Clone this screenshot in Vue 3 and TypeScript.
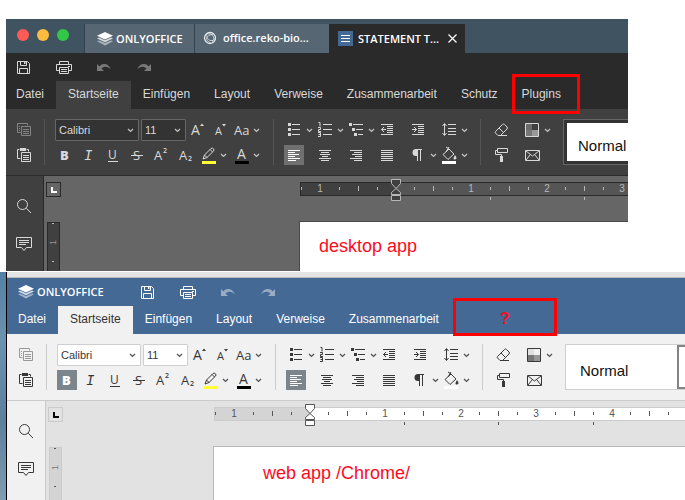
<script setup lang="ts">
import { h } from 'vue'

interface Tool {
  icon: string
  label: string
  caret?: boolean
  off?: boolean
}
interface Editor {
  id: string
  theme: 'dark' | 'light'
  tabs: string[]
  pressed: string[]
  note: string
  quarters: number
}

const editors: Editor[] = [
  {
    id: 'desktop',
    theme: 'dark',
    tabs: ['Datei', 'Startseite', 'Einfügen', 'Layout', 'Verweise', 'Zusammenarbeit', 'Schutz', 'Plugins'],
    pressed: ['left'],
    note: 'desktop app',
    quarters: 15,
  },
  {
    id: 'web',
    theme: 'light',
    tabs: ['Datei', 'Startseite', 'Einfügen', 'Layout', 'Verweise', 'Zusammenarbeit'],
    pressed: ['bold', 'left'],
    note: 'web app /Chrome/',
    quarters: 19,
  },
]

const quick: Tool[] = [
  { icon: 'save', label: 'Speichern' },
  { icon: 'print', label: 'Drucken' },
  { icon: 'undo', label: 'Rückgängig', off: true },
  { icon: 'redo', label: 'Wiederholen', off: true },
]
const clipboard: Tool[] = [
  { icon: 'copy', label: 'Kopieren', off: true },
  { icon: 'paste', label: 'Einfügen' },
]
const sizing: Tool[] = [
  { icon: 'grow', label: 'Schrift vergrößern' },
  { icon: 'shrink', label: 'Schrift verkleinern' },
  { icon: 'case', label: 'Groß-/Kleinschreibung', caret: true },
]
const styling: Tool[] = [
  { icon: 'bold', label: 'Fett' },
  { icon: 'italic', label: 'Kursiv' },
  { icon: 'underline', label: 'Unterstrichen' },
  { icon: 'strike', label: 'Durchgestrichen' },
  { icon: 'sup', label: 'Hochgestellt' },
  { icon: 'sub', label: 'Tiefgestellt' },
  { icon: 'marker', label: 'Hervorheben', caret: true },
  { icon: 'color', label: 'Schriftfarbe', caret: true },
]
const paragraph: Tool[] = [
  { icon: 'bullets', label: 'Aufzählung', caret: true },
  { icon: 'numbers', label: 'Nummerierung', caret: true },
  { icon: 'levels', label: 'Liste mit Ebenen', caret: true },
  { icon: 'outdent', label: 'Einzug verkleinern' },
  { icon: 'indent', label: 'Einzug vergrößern' },
  { icon: 'spacing', label: 'Zeilenabstand', caret: true },
  { icon: 'left', label: 'Linksbündig' },
  { icon: 'center', label: 'Zentriert' },
  { icon: 'right', label: 'Rechtsbündig' },
  { icon: 'justify', label: 'Blocksatz' },
  { icon: 'pilcrow', label: 'Formatierungszeichen', caret: true },
  { icon: 'fill', label: 'Hintergrundfarbe', caret: true },
]
const extras: Tool[] = [
  { icon: 'eraser', label: 'Stil löschen' },
  { icon: 'scheme', label: 'Farbschema', caret: true },
  { icon: 'brush', label: 'Stil kopieren' },
  { icon: 'mail', label: 'Seriendruck' },
]

const glyph = (x: number, y: number, size: number, text: string, extra = '') =>
  `<text x="${x}" y="${y}" font-size="${size}" font-family="Open Sans, sans-serif" fill="currentColor" stroke="none" ${extra}>${text}</text>`
const bar = (color: string) => `<path d="M3 16h14v3H3z" fill="${color}" stroke="none"/>`
const solid = (d: string) => `<path d="${d}" fill="currentColor" stroke="none"/>`
const line = (d: string) => `<path d="${d}"/>`

const icons: Record<string, string> = {
  save: line('M3.5 4.5h10l2 2v10h-12zM6.500 4.500v4h6v-4M5.500 16.500v-5h8v5') + solid('M10 5h1.500v2H10z'),
  print: line('M5.500 7.500v-3h9v3M5.500 13.500h-3v-6h15v6h-3M5.500 10.500h9v6h-9zM7 12.500h6M7 14.500h6') + solid('M14 9h2v1h-2z'),
  undo: solid('M3 7v7h7l-2.500-2.500C10 9 14 9 17 12.500C14.500 6.500 8.500 5.500 5.500 9.500z'),
  redo: solid('M17 7v7h-7l2.500-2.500C10 9 6 9 3 12.500C5.500 6.500 11.500 5.500 14.500 9.500z'),
  copy: line('M6.500 12.500h-3v-9h10v2M7.500 6.500h9v9h-9zM5 6.500h1M5 8.500h1M5 10.500h1M9 9.500h6M9 11.500h6M9 13.500h6'),
  paste: line('M6.500 13.500h-3v-9h2M12.500 4.500h2v2M7.500 7.500h9v9h-9zM9 10.500h6M9 12.500h6M9 14.500h6') + solid('M6 3h6v3H6z'),
  search: '<circle cx="8.500" cy="8.500" r="5"/>' + line('M12.300 12.300L17 17'),
  comment: line('M2.500 3.500h15v10h-5l-2.500 3-2.500-3h-5zM5 6.500h10M5 8.500h10M5 10.500h7'),
  grow: glyph(3, 15, 14, 'A') + solid('M12 6l2-2.500 2 2.500z'),
  shrink: glyph(5, 15, 11, 'A') + solid('M12 4h4l-2 2.500z'),
  case: glyph(2, 15, 13, 'Aa'),
  bold: glyph(5, 15, 13, 'B', 'font-weight="800"'),
  italic: '<text x="5" y="15" font-size="14" font-style="italic" font-family="Liberation Mono, monospace" fill="currentColor" stroke="none">I</text>',
  underline: glyph(5, 14, 12, 'U') + line('M5 16.500h10'),
  strike: glyph(6, 15, 13, 'S') + line('M4 10.500h12'),
  sup: glyph(3, 15, 13, 'A') + glyph(12, 8, 7, '2', 'font-weight="600"'),
  sub: glyph(4, 15, 13, 'A') + glyph(13, 16, 7, '2', 'font-weight="600"'),
  marker: bar('#ffff38') + line('M4 14l1.500-4L12 3.500q1.500-.8 2.500.3t0 2.300L8 12.500l-4 1.500M5.500 10l2.500 2.500M11 4.500l2.500 2.500'),
  color: bar('#000') + glyph(5, 14, 14, 'A'),
  bullets: line('M8 4.500h8M8 9.500h8M8 14.500h8') + solid('M4 3h3v3H4zM4 8h3v3H4zM4 13h3v3H4z'),
  numbers:
    line('M8 4.500h9M8 9.500h9M8 14.500h9') +
    line('M3.500 2.500h1.500v4M3 7.500h2.500v2h-2v2H6M3 12.500h2.500v4H3M3.500 14.500h2'),
  levels: line('M7 4.500h10M10 9.500h7M12 14.500h5') + solid('M3 3h3v3H3zM6 8h3v3H6zM8 13h3v3H8z'),
  outdent: line('M4 4.500h12M10 6.500h6M10 8.500h6M10 10.500h6M10 12.500h6M4 14.500h12M9 9.500H4.500M7 7L4.500 9.500 7 12'),
  indent: line('M4 4.500h12M10 6.500h6M10 8.500h6M10 10.500h6M10 12.500h6M4 14.500h12M4 9.500h4.500M6 7l2.500 2.500L6 12'),
  spacing: line('M9 4.500h8M9 8.500h8M9 11.500h8M9 14.500h8M5.500 4v11M3.500 6l2-2.500 2 2.500M3.500 13l2 2.500 2-2.500'),
  left: line('M4 5.500h12M4 7.500h7M4 9.500h11M4 11.500h7M4 13.500h12M4 15.500h8'),
  center: line('M4 5.500h12M6 7.500h8M5 9.500h10M7 11.500h6M4 13.500h12M6 15.500h8'),
  right: line('M4 5.500h12M8 7.500h8M6 9.500h10M9 11.500h7M4 13.500h12M8 15.500h8'),
  justify: line('M4 5.500h12M4 7.500h12M4 9.500h12M4 11.500h12M4 13.500h12M4 15.500h12'),
  pilcrow: line('M9.500 5v11M12.500 5v11M8 4.500h6') + solid('M10 4H8a3.500 3.500 0 0 0 0 7h2z'),
  fill: bar('#fff') + line('M4 9.500l6-5.500 5 5-6 5.500zM10 4l-3-2M7 7l3-5') + solid('M16 10q3 4 0 4.500t0-4.500z'),
  eraser: line('M4.500 11.500l7-7q1-1 2 0l2.500 2.500q1 1 0 2l-6.500 6.500h-2.500l-2.500-2.500q-.7-.8 0-1.500M8 8l4.500 4.500M9 15.500h7'),
  scheme:
    '<path d="M4 4h6v6H4z" fill="#c0c0c0" fill-opacity=".35" stroke="none"/><path d="M4 10h6v6H4z" fill="#777" stroke="none"/><path d="M10 10h6v6h-6z" fill="#989898" stroke="none"/>' +
    line('M3.500 3.500h13v13h-13z'),
  brush: line('M6.500 3.500h10v4h-10zM6.500 5.500h-2v4h6v2') + solid('M9 11h3v6H9z'),
  mail: line('M3.500 5.500h14v10h-14zM4 6l6.500 5L17 6M4 15l4-5M17 15l-4-5'),
}

const Icon = (props: { name: string }) =>
  h('svg', {
    class: 'icon',
    width: 20,
    height: 20,
    viewBox: '0 0 20 20',
    fill: 'none',
    stroke: 'currentColor',
    'aria-hidden': 'true',
    innerHTML: icons[props.name],
  })
Icon.props = ['name']

const Chevron = () =>
  h('svg', { width: 7, height: 5, viewBox: '0 0 7 5', fill: 'none', stroke: 'currentColor', 'stroke-width': 1.3, opacity: 0.85, 'aria-hidden': 'true' }, [
    h('path', { d: 'M1 1l2.500 2.400L6 1' }),
  ])

const Logo = () =>
  h('svg', { width: 16, height: 14, viewBox: '0 0 16 14', fill: '#fff', 'aria-hidden': 'true' }, [
    h('path', { d: 'M0 9.300l2-.9 6 2.600 6-2.600 2 .9L8 13.500z', opacity: 0.5 }),
    h('path', { d: 'M0 6.500l2-.9L8 8.200l6-2.600 2 .9-8 3.800z', opacity: 0.75 }),
    h('path', { d: 'M8 0l8 3.700L8 7.400 0 3.700z' }),
  ])

// The ruler's zero sits 96px in; quarter units get ticks, whole units a number.
const ZERO = 96
const UNIT = 75.5
const marks = (last: number) => Array.from({ length: last + 6 }, (_, i) => i - 5).filter((q) => q !== 0)
const markX = (q: number) => Math.floor(ZERO + (q * UNIT) / 4)
const stops = Array.from({ length: 5 }, (_, i) => Math.floor(ZERO + (i + 1) * 94.4))
</script>

<template>
  <main class="sheet">
    <section v-for="ed in editors" :key="ed.id" class="editor" :class="ed.theme" :aria-label="ed.note">
      <div v-if="ed.theme === 'dark'" class="titlebar">
        <span class="lights"><i class="red"></i><i class="amber"></i><i class="green"></i></span>
        <button class="window-tab brand"><Logo />ONLYOFFICE</button>
        <button class="window-tab site">
          <svg width="14" height="14" viewBox="0 0 14 14" fill="none" stroke="#e6eaed" aria-hidden="true">
            <circle cx="7" cy="7" r="5.500" stroke-width="1.300" />
            <path d="M3 3q5-1 7 1.500t-.5 6.500M10.500 3q-6 1-7 4t4 5M3.500 3.500q0 5 3.500 6t5-2" stroke-width=".7" />
          </svg>
          office.reko-bio...
        </button>
        <div class="window-tab current">
          <svg width="15" height="15" viewBox="0 0 15 15" aria-hidden="true">
            <path d="M0 0h15v15H0z" fill="#446995" />
            <path d="M3 4.500h9M3 7.500h9M3 10.500h9" stroke="#fff" />
          </svg>
          <span>STATEMENT T...</span>
          <button class="close" aria-label="Schließen">
            <svg width="9" height="9" viewBox="0 0 9 9" fill="none" stroke="currentColor" stroke-width="1.200"><path d="M.5.5l8 8M8.500.5l-8 8" /></svg>
          </button>
        </div>
      </div>
      <div v-else class="browser-edge"></div>

      <header class="head">
        <div class="quick">
          <a v-if="ed.theme === 'light'" class="brand" href="#"><Logo />ONLYOFFICE</a>
          <button v-for="t in quick" :key="t.icon" :class="{ off: t.off }" :aria-label="t.label"><Icon :name="t.icon" /></button>
        </div>
        <nav class="tabs">
          <button v-for="tab in ed.tabs" :key="tab" :class="{ active: tab === 'Startseite' }">{{ tab }}</button>
          <span class="callout-anchor"><span class="callout">{{ ed.theme === 'light' ? '?' : '' }}</span></span>
        </nav>
      </header>

      <div class="toolbar" role="toolbar">
        <div class="group clip">
          <button v-for="t in clipboard" :key="t.icon" class="tool" :class="{ off: t.off }" :aria-label="t.label"><Icon :name="t.icon" /></button>
        </div>
        <i class="divider"></i>
        <div class="group font">
          <div class="row sizing">
            <span class="combo family">
              <select aria-label="Schriftart"><option>Calibri</option><option>Arial</option></select><Chevron />
            </span>
            <span class="combo size">
              <select aria-label="Schriftgrad"><option>11</option><option>12</option></select><Chevron />
            </span>
            <button v-for="t in sizing" :key="t.icon" class="tool" :aria-label="t.label">
              <Icon :name="t.icon" /><span v-if="t.caret" class="caret"><Chevron /></span>
            </button>
          </div>
          <div class="row styling">
            <button v-for="t in styling" :key="t.icon" class="tool" :class="{ pressed: ed.pressed.includes(t.icon) }" :aria-label="t.label">
              <Icon :name="t.icon" /><span v-if="t.caret" class="caret"><Chevron /></span>
            </button>
          </div>
        </div>
        <i class="divider"></i>
        <div class="group para">
          <button v-for="t in paragraph" :key="t.icon" class="tool" :class="{ pressed: ed.pressed.includes(t.icon) }" :aria-label="t.label">
            <Icon :name="t.icon" /><span v-if="t.caret" class="caret"><Chevron /></span>
          </button>
        </div>
        <i class="divider"></i>
        <div class="group extra">
          <button v-for="t in extras" :key="t.icon" class="tool" :aria-label="t.label">
            <Icon :name="t.icon" /><span v-if="t.caret" class="caret"><Chevron /></span>
          </button>
        </div>
        <div class="gallery">
          <button class="style-card">Normal</button>
          <button v-if="ed.theme === 'light'" class="style-card chosen" aria-label="Kein Abstand"></button>
        </div>
      </div>

      <div class="work">
        <aside class="side">
          <button aria-label="Suchen"><Icon name="search" /></button>
          <button aria-label="Kommentare"><Icon name="comment" /></button>
        </aside>
        <div class="gutter">
          <button class="tabstop" aria-label="Tabulator">
            <svg width="6" height="6" viewBox="0 0 6 6"><path d="M0 0h2v4h4v2H0z" fill="currentColor" /></svg>
          </button>
          <svg class="vruler" width="13" height="60" aria-hidden="true">
            <rect class="edge" x=".5" y=".5" width="12" height="90" />
            <path class="tick" d="M5 1.500h2M5 39.500h2" />
            <text class="num" x="-23" y="9" transform="rotate(-90)">1</text>
          </svg>
        </div>
        <div class="canvas">
          <svg class="ruler" height="24" aria-hidden="true">
            <rect class="free" x="0" y="4" width="100%" height="14" />
            <rect class="margin" x="0" y="4" width="96" height="14" />
            <path class="border" d="M0 4.500h2000M0 17.500h2000M.5 4v14" />
            <template v-for="q in marks(ed.quarters)" :key="q">
              <text v-if="q % 4 === 0" class="num" :x="markX(q)" y="14" text-anchor="middle">{{ Math.abs(q / 4) }}</text>
              <path v-else class="tick" :d="q % 2 === 0 ? `M${markX(q) + 0.5} 8v5` : `M${markX(q) + 0.5} 9v3`" />
            </template>
            <path v-for="s in stops" :key="s" class="tick" :d="`M${s + 0.5} 19v3`" />
            <g class="handle">
              <path d="M91.500 1.500h9v4l-4.500 5-4.500-5z" />
              <path d="M96 10.500l4.500 4v2h-9v-2z" />
              <path d="M91.500 17.500h9v5h-9z" />
            </g>
          </svg>
          <article class="page">{{ ed.note }}</article>
        </div>
      </div>
    </section>
  </main>
</template>

<style>
body {
  background: #fff;
}
</style>

<style scoped>
.sheet {
  padding-top: 19px;
  font: 12px/16px 'Liberation Sans', Arial, sans-serif;
  overflow: hidden;
}
* {
  box-sizing: border-box;
}
svg {
  display: block;
  flex: none;
}
button {
  border: 0;
  padding: 0;
  background: none;
  color: inherit;
  font: inherit;
}
.editor {
  display: flex;
  flex-direction: column;
  margin-left: 6px;
}
.dark {
  --head: #2a2a2a;
  --head-text: #d9d9d9;
  --bar: #404040;
  --ink: #d9d9d9;
  --off: #858585;
  --line: #2a2a2a;
  --divider: #555;
  --field: #333;
  --field-line: #666;
  --pressed: #707070;
  --canvas: #666;
  --ruler: #555;
  --ruler-margin: #404040;
  --tick: #b8b8b8;
  --page-line: #4a4a4a;
  --lead: 8px;
  --offset: 237px;
  margin-right: 57px;
}
.light {
  --head: #446995;
  --head-text: #fff;
  --bar: #f1f1f1;
  --ink: #383838;
  --off: #999;
  --line: #cbcbcb;
  --divider: #cbcbcb;
  --field: #fff;
  --field-line: #cfcfcf;
  --pressed: #7d858c;
  --canvas: #e2e2e2;
  --ruler: #fff;
  --ruler-margin: #d4d4d4;
  --tick: #555;
  --page-line: #b8b8b8;
  --lead: 10px;
  --offset: 149px;
  position: relative;
  margin-top: 1px;
}
.light::before {
  content: '';
  position: absolute;
  left: -6px;
  top: 0;
  bottom: 0;
  width: 6px;
  border-right: 1px solid #000;
  background: linear-gradient(#5380a4, #6b93b0 30%, #5c7f9c 65%, #7f9db3);
}
.browser-edge {
  height: 6px;
  background: #e4e4e4;
  border-bottom: 1px solid #bcbcbc;
}

.titlebar {
  display: flex;
  align-items: flex-end;
  height: 34px;
  background: #405361;
}
.lights {
  display: flex;
  gap: 8px;
  width: 78px;
  height: 24px;
  padding-left: 11px;
}
.lights i {
  width: 12px;
  height: 12px;
  border-radius: 50%;
}
.red {
  background: #ff5b56;
}
.amber {
  background: #fdbc40;
}
.green {
  background: #33c748;
}
.window-tab {
  display: flex;
  align-items: center;
  height: 29px;
  border-left: 1px solid #33424e;
  background: #566672;
  color: #fff;
  font: 600 11px/16px 'Open Sans', sans-serif;
}
.brand {
  display: flex;
  align-items: center;
  gap: 3px;
  color: #fff;
  font: 600 11px/16px 'Open Sans', sans-serif;
  text-decoration: none;
}
.window-tab.brand {
  width: 110px;
  padding-left: 12px;
}
.site {
  width: 135px;
  gap: 6px;
  padding-left: 8px;
  padding-bottom: 2px;
}
.current {
  width: 136px;
  gap: 5px;
  padding-left: 8px;
  border-color: #2a2a2a;
  background: #2a2a2a;
}
.close {
  margin-left: auto;
  margin-right: 8px;
}

.head {
  background: var(--head);
  color: var(--head-text);
}
.quick {
  display: flex;
  align-items: center;
  gap: 20px;
  height: 28px;
  padding-left: var(--lead);
}
.quick .brand {
  width: 102px;
  padding-left: 2px;
}
.quick .off {
  opacity: 0.45;
}
.tabs {
  display: flex;
  height: 28px;
}
.tabs button {
  padding: 0 12px 2px;
  white-space: nowrap;
}
.dark .tabs button:first-child {
  padding-left: 10px;
}
.tabs .active {
  background: var(--bar);
}
.light .active {
  color: #333;
}
.callout-anchor {
  position: relative;
}
.callout {
  position: absolute;
  z-index: 1;
  border: 3px solid #f00;
  color: #ff0a1e;
  font: 700 16px/36px 'Liberation Sans', Arial, sans-serif;
  text-align: center;
}
.dark .callout {
  right: -7px;
  top: -7px;
  width: 68px;
  height: 40px;
}
.light .callout {
  left: 2px;
  top: -8px;
  width: 104px;
  height: 38px;
}

.toolbar {
  display: flex;
  gap: 10px;
  padding: 10px 0 10px var(--lead);
  border-bottom: 1px solid var(--line);
  background: var(--bar);
  color: var(--ink);
}
.divider {
  flex: none;
  width: 1px;
  height: 46px;
  background: var(--divider);
}
.group {
  flex: none;
}
.clip {
  display: grid;
  grid-template-rows: 20px 20px;
  gap: 5px;
  padding-top: 1px;
}
.clip .off {
  color: var(--off);
}
.font {
  display: flex;
  flex-direction: column;
  gap: 4px;
  padding-right: 2px;
}
.row {
  display: flex;
  align-items: center;
}
.sizing {
  gap: 2px;
  height: 22px;
}
.styling {
  gap: 4px;
}
.para,
.extra {
  display: grid;
  align-content: start;
  row-gap: 5px;
  padding-top: 1px;
}
.para {
  grid-template-columns: repeat(6, 31px);
}
.extra {
  grid-template-columns: 31px 31px;
}
.tool {
  display: flex;
  align-items: center;
  height: 20px;
}
.pressed .icon {
  background: var(--pressed);
  color: #fff;
}
.caret {
  display: flex;
  justify-content: center;
  width: 11px;
}
.font .caret {
  width: 9px;
}
.combo {
  display: flex;
  align-items: center;
  justify-content: flex-end;
  height: 22px;
  padding-right: 4px;
  border: 1px solid var(--field-line);
  border-radius: 1px;
  background: var(--field);
}
.family {
  width: 84px;
}
.size {
  width: 45px;
}
.combo select {
  flex: 1;
  min-width: 0;
  height: 20px;
  padding: 0 0 0 3px;
  border: 0;
  appearance: none;
  background: none;
  color: inherit;
  font: 11px/20px 'Liberation Sans', Arial, sans-serif;
}
.gallery {
  display: flex;
  flex: 1;
  min-width: 0;
  height: 46px;
  border: 1px solid var(--field-line);
  border-right: 0;
  background: #333;
  overflow: hidden;
}
.light .gallery {
  background: #fff;
}
.dark .gallery {
  padding: 3px 0 3px 3px;
}
.style-card {
  flex: none;
  width: 111px;
  padding: 8px 0 0 11px;
  background: #fff;
  color: #111;
  font-size: 15px;
  text-align: left;
}
.light .style-card {
  padding-left: 14px;
}
.light .chosen {
  border: 2px solid #848484;
}

.work {
  display: flex;
  background: var(--canvas);
}
.side {
  display: flex;
  flex: none;
  flex-direction: column;
  align-items: flex-start;
  gap: 18px;
  padding: 20px 9px 0 var(--lead);
  border-right: 1px solid var(--line);
  background: var(--bar);
  color: var(--ink);
}
.gutter {
  display: flex;
  flex: none;
  flex-direction: column;
  gap: 25px;
  width: 18px;
  height: 95px;
  padding: 6px 0 0 2px;
  overflow: hidden;
}
.tabstop {
  display: grid;
  flex: none;
  place-items: center;
  width: 15px;
  height: 15px;
  border: 1px solid var(--line);
  color: #fff;
}
.light .tabstop {
  color: #000;
}
.light .gutter {
  height: 99px;
}
.vruler {
  margin-left: 1px;
}
.vruler .num {
  opacity: 0.7;
  font-size: 9px;
}
.edge {
  fill: var(--ruler-margin);
  stroke: var(--line);
}
.canvas {
  display: flex;
  flex: 1;
  flex-direction: column;
  gap: 19px;
  min-width: 0;
  padding: 2px 0 0 var(--offset);
}
.ruler {
  align-self: stretch;
  width: auto;
  margin-left: 1px;
}
.free {
  fill: var(--ruler);
}
.margin {
  fill: var(--ruler-margin);
}
.border {
  fill: none;
  stroke: var(--line);
}
.tick {
  fill: none;
  stroke: var(--tick);
}
.num {
  fill: var(--tick);
  font: 10px 'Liberation Sans', Arial, sans-serif;
}
.handle {
  fill: var(--ruler-margin);
  stroke: var(--tick);
}
.light .handle {
  fill: #fff;
}
.page {
  flex: 1;
  border: 1px solid var(--page-line);
  border-width: 1px 0 0 1px;
  background: #fff;
  color: #ff0a1e;
  font-size: 18px;
  line-height: 49px;
}
.dark .page {
  padding-left: 19px;
}
.light .page {
  padding-left: 49px;
  line-height: 53px;
}
</style>
